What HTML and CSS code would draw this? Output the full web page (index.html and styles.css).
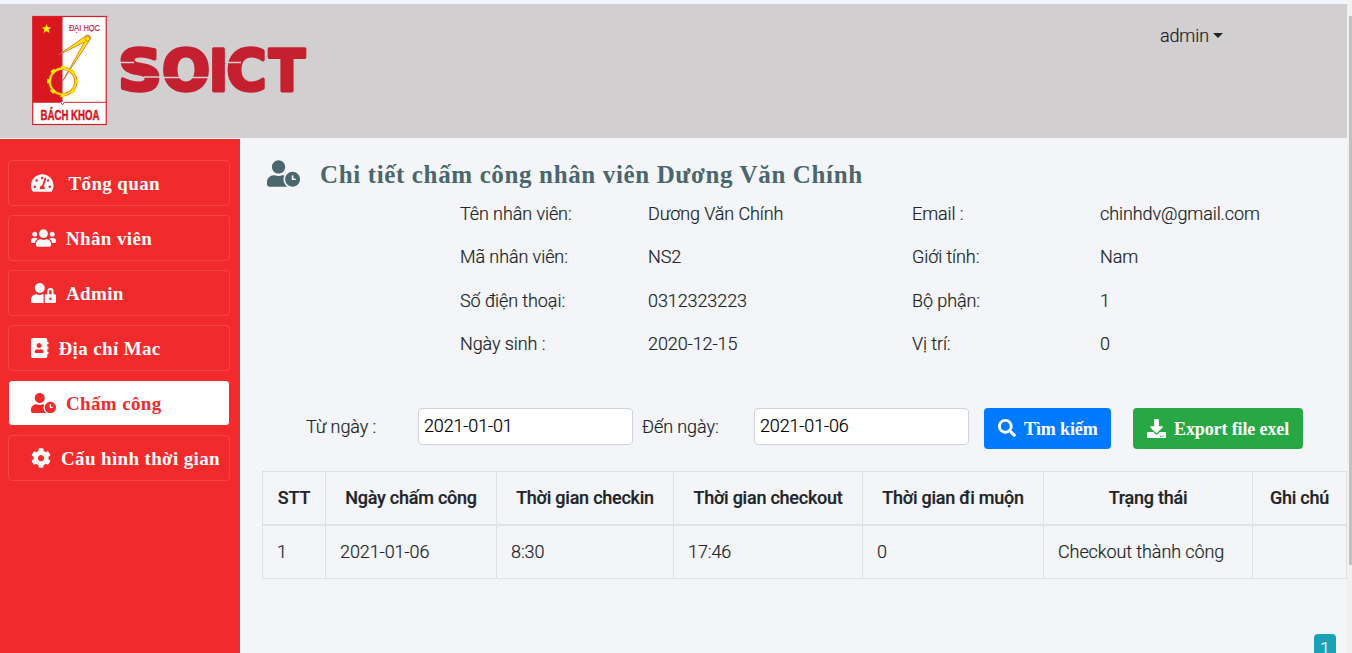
FILE: index.html
```
<!DOCTYPE html>
<html lang="vi">
<head>
<meta charset="utf-8">
<title>Chấm công</title>
<link rel="stylesheet" href="styles.css">
</head>
<body>
<svg class="defs" width="0" height="0">
  <symbol id="clock" viewBox="0 0 640 512"><path d="M496 224c-79.6 0-144 64.4-144 144s64.4 144 144 144 144-64.4 144-144-64.4-144-144-144zm64 150.3c0 5.3-4.4 9.7-9.7 9.7h-60.6c-5.3 0-9.7-4.4-9.7-9.7v-76.6c0-5.3 4.4-9.7 9.7-9.7h12.6c5.3 0 9.7 4.4 9.7 9.7V352h38.3c5.3 0 9.7 4.4 9.7 9.7v12.6zM320 368c0-27.8 6.7-54.1 18.2-77.5-8-1.5-16.2-2.5-24.6-2.5h-16.7c-22.2 10.2-46.9 16-72.9 16s-50.6-5.8-72.9-16h-16.7C60.2 288 0 348.2 0 422.4V464c0 26.5 21.5 48 48 48h347.1c-45.3-31.9-75.1-84.5-75.1-144zm-96-112c70.7 0 128-57.3 128-128S294.7 0 224 0 96 57.3 96 128s57.3 128 128 128z"/></symbol>
</svg>
<div class="screen">
<div class="app">
  <header class="header">
    <svg class="logo" width="280" height="114" viewBox="30 14 280 114">
      <rect x="32.700" y="16.500" width="73.500" height="108" fill="#fff" stroke="#d8202a" stroke-width="1.200"/>
      <rect x="33" y="17" width="29.500" height="85" fill="#d8171f"/>
      <path d="M33 102.300h27.500l2 2.500 2-2.500H106" fill="#fff" stroke="#d8202a"/>
      <path d="M46.500 24l1.300 3.200 3.500.200-2.700 2.200.900 3.400-3-1.900-3 1.900.900-3.400-2.700-2.200 3.500-.200z" fill="#ffec00"/>
      <text x="69" y="30.500" textLength="31" lengthAdjust="spacingAndGlyphs" class="logo-top">ĐẠI HỌC</text>
      <text x="40.500" y="119.500" textLength="59" lengthAdjust="spacingAndGlyphs" class="logo-name">BÁCH KHOA</text>
      <g stroke="#d9492a" stroke-width=".700" fill="#ffec00">
        <path d="M58.500 55L85 36.500a2.600 2.600 0 1 1 5 3L63 80.500 84.500 42z"/>
        <circle cx="87.500" cy="38.800" r="2.500"/>
      </g>
      <circle cx="62.800" cy="81.500" r="13" fill="none" stroke="#e05b20" stroke-width="3.200"/>
      <circle cx="62.800" cy="81.500" r="14.500" fill="none" stroke="#ffe600" stroke-width="2.400" stroke-dasharray="4.500 6.888" stroke-dashoffset="2.250"/>
      <circle cx="62.800" cy="81.500" r="13" fill="none" stroke="#ffe600" stroke-width="1.900"/>
      <g class="wordmark">
        <text x="118" y="91" textLength="44" lengthAdjust="spacingAndGlyphs">S</text>
        <text x="162" y="91" textLength="48" lengthAdjust="spacingAndGlyphs">O</text>
        <text x="209" y="91" textLength="19" lengthAdjust="spacingAndGlyphs">I</text>
        <text x="226.500" y="91" textLength="40" lengthAdjust="spacingAndGlyphs">C</text>
        <text x="269" y="91" textLength="36" lengthAdjust="spacingAndGlyphs">T</text>
      </g>
      <path d="M118 62.500h16M144 77h20M164 77.500h46M226 62.500h15" stroke="#d1cfcf" stroke-width="1.600"/>
    </svg>
    <div class="user">admin<span class="caret"></span></div>
  </header>
  <div class="body">
    <nav class="sidebar">
      <a class="item wide"><svg width="22.500" height="20" viewBox="0 0 576 512"><path d="M288 32C128.940 32 0 160.940 0 320c0 52.800 14.250 102.260 39.060 144.800 5.610 9.620 16.300 15.200 27.440 15.200h443c11.140 0 21.830-5.580 27.440-15.200C561.750 422.260 576 372.800 576 320c0-159.060-128.940-288-288-288zm0 64c14.710 0 26.580 10.130 30.320 23.650-1.110 2.260-2.640 4.230-3.450 6.670l-9.220 27.670c-5.130 3.490-10.970 6.010-17.640 6.010-17.670 0-32-14.330-32-32S270.330 96 288 96zM96 384c-17.670 0-32-14.330-32-32s14.330-32 32-32 32 14.330 32 32-14.330 32-32 32zm48-160c-17.670 0-32-14.330-32-32s14.330-32 32-32 32 14.330 32 32-14.330 32-32 32zm246.770-72.410l-61.330 184C343.130 347.330 352 364.540 352 384c0 11.720-3.380 22.550-8.880 32H232.880c-5.500-9.450-8.880-20.280-8.880-32 0-33.940 26.500-61.430 59.900-63.590l61.340-184.010c4.170-12.560 17.730-19.450 30.360-15.170 12.570 4.190 19.350 17.790 15.170 30.360zm14.660 57.200l15.520-46.550c3.470-1.290 7.130-2.230 11.050-2.230 17.670 0 32 14.330 32 32s-14.330 32-32 32c-11.380-.010-20.890-6.280-26.570-15.220zM480 384c-17.670 0-32-14.330-32-32s14.330-32 32-32 32 14.330 32 32-14.330 32-32 32z"/></svg><span>Tổng quan</span></a>
      <a class="item"><svg width="25" height="20" viewBox="0 0 640 512"><path d="M96 224c35.300 0 64-28.700 64-64s-28.700-64-64-64-64 28.700-64 64 28.700 64 64 64zm448 0c35.300 0 64-28.700 64-64s-28.700-64-64-64-64 28.700-64 64 28.700 64 64 64zm32 32h-64c-17.600 0-33.500 7.100-45.100 18.600 40.300 22.100 68.900 62 75.100 109.400h66c17.700 0 32-14.300 32-32v-32c0-35.300-28.700-64-64-64zm-256 0c61.900 0 112-50.100 112-112S381.900 32 320 32 208 82.100 208 144s50.100 112 112 112zm76.800 32h-8.300c-20.800 10-43.900 16-68.500 16s-47.600-6-68.500-16h-8.300C179.600 288 128 339.600 128 403.200V432c0 26.500 21.500 48 48 48h288c26.500 0 48-21.500 48-48v-28.800c0-63.600-51.600-115.200-115.200-115.200zm-223.700-13.400C161.500 263.100 145.600 256 128 256H64c-35.300 0-64 28.700-64 64v32c0 17.700 14.300 32 32 32h65.900c6.300-47.400 34.900-87.300 75.200-109.400z"/></svg><span>Nhân viên</span></a>
      <a class="item"><svg width="25" height="20" viewBox="0 0 640 512"><path d="M224 256A128 128 0 1 0 96 128a128 128 0 0 0 128 128zm96 64a63.080 63.080 0 0 1 8.100-30.500c-4.800-.500-9.500-1.500-14.500-1.500h-16.700a174.080 174.080 0 0 1-145.800 0h-16.700A134.430 134.430 0 0 0 0 422.400V464a48 48 0 0 0 48 48h280.900a63.540 63.540 0 0 1-8.900-32zm288-32h-32v-80a80 80 0 0 0-160 0v80h-32a32 32 0 0 0-32 32v160a32 32 0 0 0 32 32h224a32 32 0 0 0 32-32V320a32 32 0 0 0-32-32zM496 432a32 32 0 1 1 32-32 32 32 0 0 1-32 32zm32-144h-64v-80a32 32 0 0 1 64 0z"/></svg><span>Admin</span></a>
      <a class="item"><svg width="17.500" height="20" viewBox="0 0 448 512"><path d="M436 160c6.600 0 12-5.400 12-12v-40c0-6.600-5.400-12-12-12h-20V48c0-26.500-21.500-48-48-48H48C21.500 0 0 21.500 0 48v416c0 26.500 21.500 48 48 48h320c26.500 0 48-21.500 48-48v-48h20c6.600 0 12-5.400 12-12v-40c0-6.600-5.400-12-12-12h-20v-64h20c6.600 0 12-5.400 12-12v-40c0-6.600-5.400-12-12-12h-20v-64h20zm-228-32c35.300 0 64 28.700 64 64s-28.700 64-64 64-64-28.700-64-64 28.700-64 64-64zm112 236.800c0 10.600-10 19.200-22.400 19.200H118.400C106 384 96 375.400 96 364.800v-19.200c0-31.800 30.100-57.600 67.200-57.600h5c12.300 5.100 25.700 8 39.800 8s27.600-2.900 39.800-8h5c37.100 0 67.200 25.800 67.200 57.600v19.200z"/></svg><span>Địa chỉ Mac</span></a>
      <a class="item active"><svg width="25" height="20"><use href="#clock"/></svg><span>Chấm công</span></a>
      <a class="item"><svg width="20" height="20" viewBox="0 0 512 512"><path d="M487.400 315.700l-42.600-24.600c4.300-23.200 4.300-47 0-70.200l42.600-24.600c4.900-2.800 7.100-8.600 5.500-14-11.100-35.600-30-67.800-54.700-94.600-3.800-4.100-10-5.100-14.800-2.300L380.800 110c-17.900-15.400-38.500-27.300-60.800-35.100V25.800c0-5.600-3.900-10.500-9.400-11.700-36.700-8.200-74.300-7.800-109.200 0-5.500 1.200-9.400 6.100-9.400 11.700V75c-22.200 7.900-42.800 19.800-60.800 35.100L88.700 85.500c-4.900-2.800-11-1.900-14.800 2.300-24.700 26.700-43.600 58.900-54.700 94.600-1.700 5.400.600 11.200 5.500 14L67.300 221c-4.300 23.200-4.300 47 0 70.200l-42.600 24.600c-4.900 2.800-7.100 8.600-5.500 14 11.100 35.600 30 67.800 54.700 94.600 3.800 4.100 10 5.100 14.800 2.300l42.600-24.600c17.900 15.400 38.500 27.300 60.800 35.100v49.200c0 5.600 3.900 10.500 9.400 11.700 36.700 8.200 74.300 7.800 109.200 0 5.500-1.200 9.400-6.100 9.400-11.700v-49.200c22.200-7.900 42.800-19.800 60.800-35.100l42.600 24.600c4.900 2.800 11 1.900 14.800-2.300 24.700-26.700 43.600-58.900 54.700-94.600 1.500-5.500-.700-11.300-5.600-14.100zM256 336c-44.100 0-80-35.900-80-80s35.900-80 80-80 80 35.900 80 80-35.900 80-80 80z"/></svg><span>Cấu hình thời gian</span></a>
    </nav>
    <main class="main">
      <h1 class="title"><svg width="33" height="27"><use href="#clock"/></svg><span>Chi tiết chấm công nhân viên Dương Văn Chính</span></h1>
      <div class="info">
        <span>Tên nhân viên:</span><span>Dương Văn Chính</span><span>Email :</span><span>chinhdv@gmail.com</span>
        <span>Mã nhân viên:</span><span>NS2</span><span>Giới tính:</span><span>Nam</span>
        <span>Số điện thoại:</span><span>0312323223</span><span>Bộ phận:</span><span>1</span>
        <span>Ngày sinh :</span><span>2020-12-15</span><span>Vị trí:</span><span>0</span>
      </div>
      <form class="filter">
        <label class="from">Từ ngày :</label><input class="date" type="text" value="2021-01-01">
        <label class="to">Đến ngày:</label><input class="date" type="text" value="2021-01-06">
        <button type="button" class="btn search"><svg width="18" height="18" viewBox="0 0 512 512"><path d="M505 442.700L405.300 343c-4.500-4.500-10.600-7-17-7H372c27.600-35.300 44-79.700 44-128C416 93.100 322.900 0 208 0S0 93.100 0 208s93.100 208 208 208c48.300 0 92.700-16.400 128-44v16.300c0 6.400 2.500 12.500 7 17l99.700 99.700c9.400 9.400 24.600 9.400 33.900 0l28.300-28.300c9.400-9.400 9.400-24.600.100-34zM208 336c-70.700 0-128-57.200-128-128 0-70.700 57.200-128 128-128 70.700 0 128 57.200 128 128 0 70.700-57.200 128-128 128z"/></svg><span>Tìm kiếm</span></button>
        <button type="button" class="btn export"><svg width="19" height="19" viewBox="0 0 512 512"><path d="M216 0h80c13.300 0 24 10.700 24 24v168h87.700c17.800 0 26.700 21.500 14.100 34.100L269.700 378.300c-7.500 7.500-19.800 7.500-27.300 0L90.100 226.100c-12.600-12.600-3.700-34.100 14.100-34.100H192V24c0-13.300 10.700-24 24-24zm296 376v112c0 13.300-10.700 24-24 24H24c-13.300 0-24-10.700-24-24V376c0-13.300 10.700-24 24-24h146.700l49 49c20.100 20.100 52.500 20.100 72.600 0l49-49H488c13.300 0 24 10.700 24 24zm-124 88c0-11-9-20-20-20s-20 9-20 20 9 20 20 20 20-9 20-20zm64 0c0-11-9-20-20-20s-20 9-20 20 9 20 20 20 20-9 20-20z"/></svg><span>Export file exel</span></button>
      </form>
      <table class="table">
        <colgroup><col class="c1"><col class="c2"><col class="c3"><col class="c4"><col class="c5"><col class="c6"><col class="c7"></colgroup>
        <thead><tr><th>STT</th><th>Ngày chấm công</th><th>Thời gian checkin</th><th>Thời gian checkout</th><th>Thời gian đi muộn</th><th>Trạng thái</th><th>Ghi chú</th></tr></thead>
        <tbody><tr><td>1</td><td>2021-01-06</td><td>8:30</td><td>17:46</td><td>0</td><td>Checkout thành công</td><td></td></tr></tbody>
      </table>
      <div class="pager"><span class="page">1</span></div>
    </main>
  </div>
</div>
<div class="scroll"><div class="thumb"></div></div>
</div>
</body>
</html>
```
FILE: styles.css
```
* { box-sizing: border-box; }
body { margin: 0; overflow: hidden; background: #f3f5f9; color: #212529; font: 350 18px/27px Roboto, sans-serif; letter-spacing: -.09px; -webkit-text-stroke: .2px; }
svg { display: block; fill: currentColor; flex: none; -webkit-text-stroke: 0; letter-spacing: 0; }
.defs { position: absolute; }
.screen { display: flex; height: 653px; overflow: hidden; }
.app { width: 1347px; padding-top: 4px; display: flex; flex-direction: column; }
.header { height: 134px; flex: none; background: #d1cfcf; display: flex; justify-content: space-between; align-items: flex-start; padding: 10px 124px 0 30px; }
.logo-top { font: 400 9.500px "Liberation Sans", sans-serif; fill: #c8202a; stroke: #c8202a; stroke-width: .2px; }
.logo-name { font: 700 15px "Liberation Sans", sans-serif; fill: #d8171f; stroke: #d8171f; stroke-width: .5px; }
.wordmark { font: 700 57px "DejaVu Sans", sans-serif; fill: #c5202f; stroke: #c5202f; stroke-width: 3.500px; stroke-linejoin: round; }
.user { display: flex; align-items: center; padding-top: 8px; }
.caret { border: 5.500px solid transparent; border-top-color: #212529; border-bottom: 0; margin-left: 4px; }
.body { flex: 1; display: flex; margin-top: 1px; min-height: 0; }
.sidebar { width: 240px; flex: none; background: #f12b2c; padding: 21px 10px 0 8px; display: flex; flex-direction: column; gap: 9px; }
.item { height: 46px; flex: none; border: 1px solid #f34546; border-radius: 4px; color: #fbfbfb; display: flex; align-items: center; gap: 10px; padding-left: 22px; font: 700 19px/30px "Liberation Serif", serif; letter-spacing: .36px; white-space: nowrap; -webkit-text-stroke: 0; }
.item span { padding-top: 2px; }
.item svg { margin-bottom: 1px; }
.wide { gap: 15px; }
.active { background: #fff; border-color: #f12b2c; color: #f12b2c; }
.main { width: 1107px; padding: 20px 0 0 22px; }
.title { margin: 0; padding-left: 5px; height: 31px; display: flex; align-items: center; gap: 20px; font: 700 25px/31px "Liberation Serif", serif; letter-spacing: .64px; color: #4b666d; white-space: nowrap; -webkit-text-stroke: 0; }
.title svg { margin-bottom: 2px; }
.info { display: grid; grid-template-columns: 188px 264px 188px 1fr; grid-auto-rows: 43.400px; line-height: 27px; padding: 10px 0 0 198px; height: 218px; }
.filter { display: flex; height: 41px; align-items: flex-start; white-space: nowrap; }
.filter label { line-height: 37px; }
.from { width: 156px; padding-left: 44px; }
.to { width: 121px; padding-left: 9px; }
.date { width: 215px; height: 37px; border: 1px solid #ced4da; border-radius: 4px; background: #fff; padding: 0 5px 2px; font: 350 18px Roboto, sans-serif; letter-spacing: -.15px; color: #000; }
.btn { height: 41px; border: 0; border-radius: 4px; color: #fff; display: flex; align-items: center; padding: 0 0 0 14px; gap: 8px; font: 700 18px "Liberation Serif", serif; letter-spacing: -.12px; white-space: nowrap; -webkit-text-stroke: 0; }
.btn span { padding-top: 2px; }
.search { width: 127px; margin-left: 15px; background: #007bff; }
.search svg { margin-bottom: 1px; }
.export { width: 170px; margin-left: 22px; background: #28a745; }
.export svg { margin-bottom: 1px; }
.table { width: 1085px; margin-top: 22px; border-collapse: collapse; table-layout: fixed; }
.c1 { width: 63px; } .c2 { width: 171px; } .c3 { width: 177px; } .c4 { width: 189px; } .c5 { width: 181px; } .c6 { width: 209px; } .c7 { width: 94px; }
.table th, .table td { border: 1px solid #dee2e6; height: 53px; padding: 0 14px; text-align: left; white-space: nowrap; }
.table td { height: 54px; }
.table th { border-bottom-width: 2px; text-align: center; font-weight: 500; padding: 0; letter-spacing: -.24px; }
.pager { display: flex; justify-content: flex-end; padding: 55px 11px 0 0; }
.page { width: 22px; height: 30px; border-radius: 4px; background: #17a2b8; color: #fff; text-align: center; line-height: 29px; }
.scroll { width: 5px; background: #f1f1f1; padding: 16px 0 0 2px; }
.thumb { width: 3px; height: 549px; background: #c1c1c1; }
```
